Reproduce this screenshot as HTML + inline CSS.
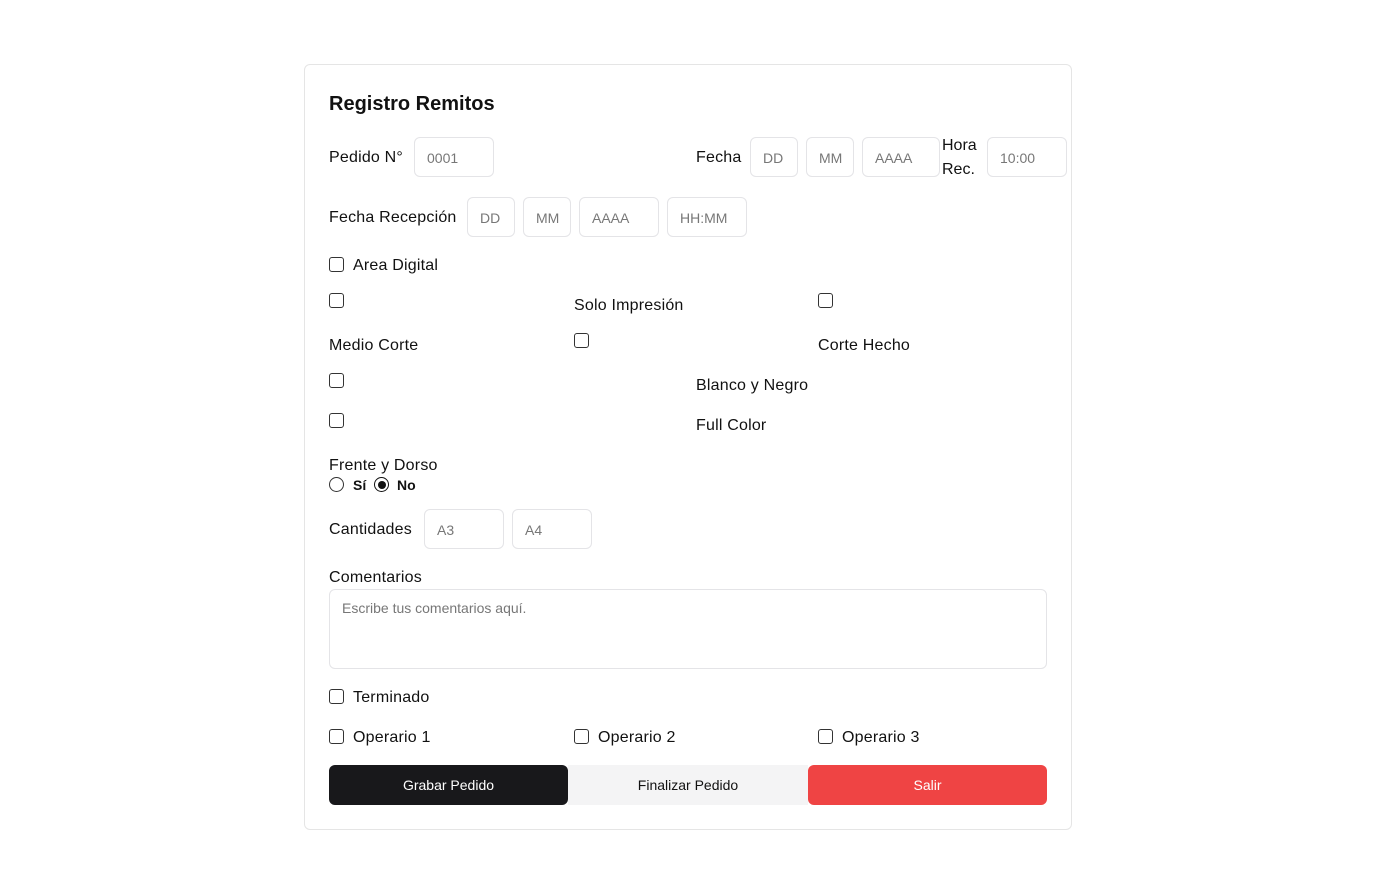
<!DOCTYPE html>
<html><head><meta charset="utf-8"><style>
body{margin:0;width:1376px;height:894px;background:#fff;font-family:"Liberation Sans",sans-serif;color:#111;position:relative;overflow:hidden}
.a{position:absolute}
.card{left:304px;top:64px;width:766px;height:764px;border:1px solid #e5e5e5;border-radius:6px}
.t{font-size:16px;line-height:20px;transform:translateY(-9px);white-space:nowrap;letter-spacing:0.2px}
.in{border:1px solid #e4e4e7;border-radius:6px;box-sizing:border-box;height:40px;font-size:14px;color:#777;padding-left:12px;line-height:40px;overflow:hidden;white-space:nowrap}
.cb{width:13px;height:13px;border:1.5px solid #333;border-radius:3px;background:#fff}
.btn{top:765px;height:40px;font-size:14px;line-height:40px;text-align:center;border-radius:6px}
</style></head><body>
<div class="a card"></div>
<div class="a" style="left:329px;top:92px;font-size:20px;font-weight:bold;line-height:24px">Registro Remitos</div>

<div class="a t" style="left:329px;top:157px">Pedido N°</div>
<div class="a in" style="left:414px;top:137px;width:80px">0001</div>
<div class="a t" style="left:696px;top:157px">Fecha</div>
<div class="a in" style="left:750px;top:137px;width:48px">DD</div>
<div class="a in" style="left:806px;top:137px;width:48px">MM</div>
<div class="a in" style="left:862px;top:137px;width:78px">AAAA</div>
<div class="a" style="left:942px;top:134px;font-size:16px;line-height:24px">Hora<br>Rec.</div>
<div class="a in" style="left:987px;top:137px;width:80px">10:00</div>

<div class="a t" style="left:329px;top:217px">Fecha Recepción</div>
<div class="a in" style="left:467px;top:197px;width:48px">DD</div>
<div class="a in" style="left:523px;top:197px;width:48px">MM</div>
<div class="a in" style="left:579px;top:197px;width:80px">AAAA</div>
<div class="a in" style="left:667px;top:197px;width:80px">HH:MM</div>

<div class="a cb" style="left:329px;top:257px"></div><div class="a t" style="left:353px;top:265px">Area Digital</div>
<div class="a cb" style="left:329px;top:293px"></div>
<div class="a t" style="left:574px;top:305px">Solo Impresión</div>
<div class="a cb" style="left:818px;top:293px"></div>
<div class="a t" style="left:329px;top:345px">Medio Corte</div>
<div class="a cb" style="left:574px;top:333px"></div>
<div class="a t" style="left:818px;top:345px">Corte Hecho</div>
<div class="a cb" style="left:329px;top:373px"></div>
<div class="a t" style="left:696px;top:385px">Blanco y Negro</div>
<div class="a cb" style="left:329px;top:413px"></div>
<div class="a t" style="left:696px;top:425px">Full Color</div>

<div class="a t" style="left:329px;top:465px">Frente y Dorso</div>
<div class="a" style="left:329px;top:477px;width:13px;height:13px;border:1.5px solid #333;border-radius:50%"></div>
<div class="a" style="left:353px;top:477px;font-size:14px;font-weight:bold">Sí</div>
<div class="a" style="left:374px;top:477px;width:13px;height:13px;border:1.5px solid #111;border-radius:50%"></div>
<div class="a" style="left:378px;top:481px;width:8px;height:8px;background:#111;border-radius:50%"></div>
<div class="a" style="left:397px;top:477px;font-size:14px;font-weight:bold">No</div>

<div class="a t" style="left:329px;top:529px">Cantidades</div>
<div class="a in" style="left:424px;top:509px;width:80px">A3</div>
<div class="a in" style="left:512px;top:509px;width:80px">A4</div>

<div class="a t" style="left:329px;top:577px">Comentarios</div>
<div class="a in" style="left:329px;top:589px;width:718px;height:80px;line-height:20px;padding-top:8px">Escribe tus comentarios aquí.</div>

<div class="a cb" style="left:329px;top:689px"></div><div class="a t" style="left:353px;top:697px">Terminado</div>
<div class="a cb" style="left:329px;top:729px"></div><div class="a t" style="left:353px;top:737px">Operario 1</div>
<div class="a cb" style="left:574px;top:729px"></div><div class="a t" style="left:598px;top:737px">Operario 2</div>
<div class="a cb" style="left:818px;top:729px"></div><div class="a t" style="left:842px;top:737px">Operario 3</div>

<div class="a btn" style="left:329px;width:239px;background:#18181b;color:#fff">Grabar Pedido</div>
<div class="a btn" style="left:568px;width:240px;background:#f4f4f5;color:#111;border-radius:0">Finalizar Pedido</div>
<div class="a btn" style="left:808px;width:239px;background:#ef4444;color:#fff">Salir</div>
</body></html>
